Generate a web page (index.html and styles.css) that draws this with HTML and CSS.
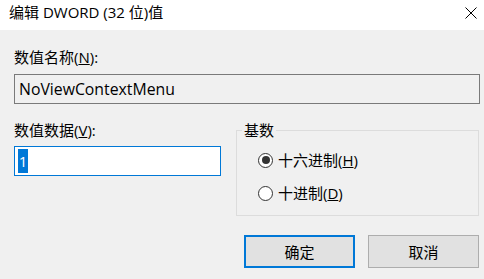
FILE: index.html
```html
<!DOCTYPE html>
<html lang="zh-CN">
<head>
<meta charset="utf-8">
<title>编辑 DWORD (32 位)值</title>
<link rel="stylesheet" href="styles.css">
</head>
<body>
<div class="dialog">
  <div class="titlebar">
    <span class="title">编辑 DWORD (32 位)值</span>
    <svg class="close" width="12" height="12" viewBox="0 0 12 12"><path d="M0.5 0.5L11.5 11.5M11.5 0.5L0.5 11.5" stroke="#000" stroke-width="1" fill="none"/></svg>
  </div>
  <div class="content">
    <div class="label">数值名称(<u>N</u>):</div>
    <div class="textbox readonly">NoViewContextMenu</div>
    <div class="row">
      <div class="col-left">
        <div class="label">数值数据(<u>V</u>):</div>
        <div class="textbox focused"><span class="sel">1</span></div>
      </div>
      <fieldset class="group">
        <legend>基数</legend>
        <div class="radio"><span class="dot checked"></span><span>十六进制(<u>H</u>)</span></div>
        <div class="radio"><span class="dot"></span><span>十进制(<u>D</u>)</span></div>
      </fieldset>
    </div>
    <div class="buttons">
      <div class="btn default">确定</div>
      <div class="btn">取消</div>
    </div>
  </div>
</div>
</body>
</html>
```
FILE: styles.css
```css
html, body {
  margin: 0;
  padding: 0;
}
body {
  width: 484px;
  height: 279px;
  overflow: hidden;
  background: #f0f0f0;
  font-family: "Open Sans", "Noto Sans CJK SC", sans-serif;
  font-size: 15px;
  color: #000;
}
.dialog {
  width: 484px;
  height: 279px;
}
.titlebar {
  height: 30px;
  background: #fff;
  display: flex;
  align-items: center;
  justify-content: space-between;
  padding: 0 7px 0 9px;
  box-sizing: border-box;
}
.title {
  line-height: 20px;
  margin-top: -6px;
}
.close {
  display: block;
  margin-top: -4px;
}
.content {
  padding: 17px 5px 0 14px;
}
.label {
  line-height: 20px;
  height: 20px;
}
.textbox {
  box-sizing: border-box;
  height: 30px;
  line-height: 28px;
  border: 1px solid #7a7a7a;
  padding: 0 4px;
}
.readonly {
  margin-top: 7px;
  background: #f0f0f0;
  width: 466px;
  font-size: 15.8px;
}
.focused {
  margin-top: 6px;
  background: #fff;
  border-color: #0078d7;
  padding: 2px 3px;
  width: 207px;
}
.sel {
  display: inline-block;
  background: #0078d7;
  color: #fff;
  height: 24px;
  line-height: 24px;
  width: 10px;
  text-align: center;
  vertical-align: top;
}
.row {
  display: flex;
  margin-top: 16px;
  gap: 15px;
}
.col-left {
  width: 207px;
}
.group {
  margin: 0;
  box-sizing: border-box;
  width: 243px;
  height: 96px;
  border: 1px solid #dcdcdc;
  padding: 10px 5px 0 21px;
}
.group legend {
  padding: 0 2px;
  margin-left: -16px;
  line-height: 20px;
}
.radio {
  display: flex;
  align-items: center;
  gap: 5px;
  height: 20px;
  line-height: 20px;
  margin-bottom: 13px;
}
.dot {
  box-sizing: border-box;
  width: 15px;
  height: 15px;
  border: 1px solid #333;
  border-radius: 50%;
  background: #fff;
  display: flex;
  align-items: center;
  justify-content: center;
}
.dot.checked::after {
  content: "";
  width: 8px;
  height: 8px;
  border-radius: 50%;
  background: #333;
}
.buttons {
  display: flex;
  justify-content: flex-end;
  gap: 13px;
  margin-top: 19px;
}
.btn {
  box-sizing: border-box;
  width: 111px;
  height: 33px;
  background: #e1e1e1;
  border: 1px solid #adadad;
  display: flex;
  align-items: center;
  justify-content: center;
}
.btn.default {
  border: 2px solid #0078d7;
}
```
